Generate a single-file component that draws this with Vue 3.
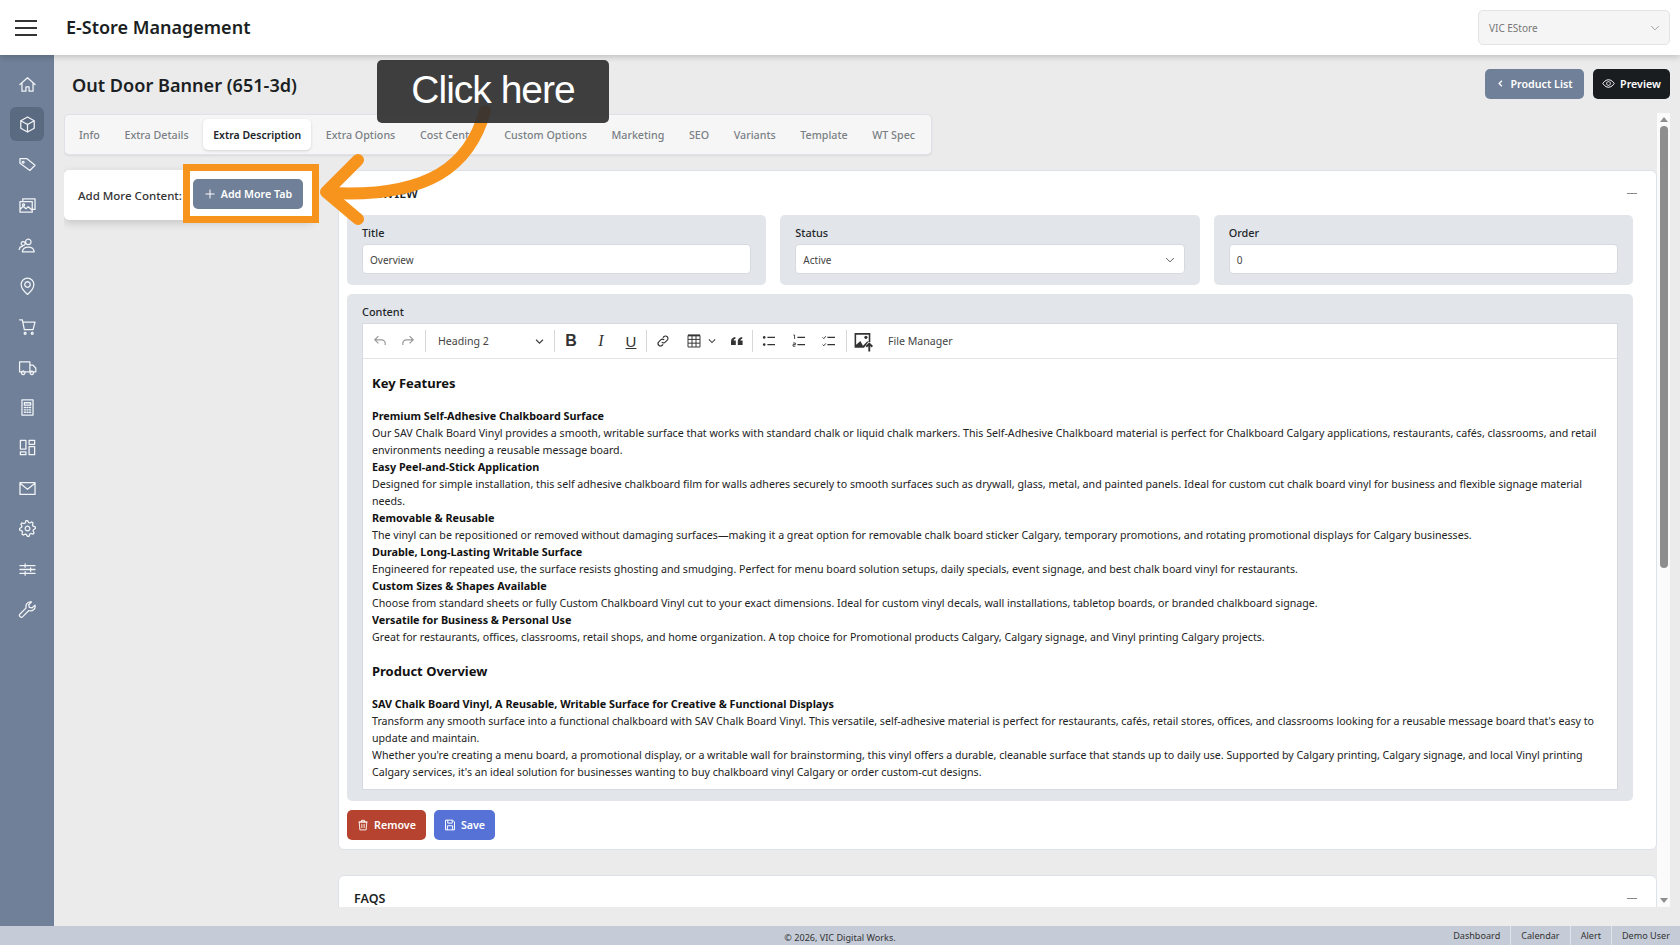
<template>
  <div class="app">
    <header class="topbar">
      <button class="burger"><span></span><span></span><span></span></button>
      <div class="brand">E-Store Management</div>
      <div class="store">
        <span>VIC EStore</span>
        <svg viewBox="0 0 16 16" width="12" height="12"><path d="M3 5.500 8 10.500l5-5" fill="none" stroke="#999" stroke-width="1.200" /></svg>
      </div>
    </header>

    <div class="body">
      <aside class="sidebar">
        <a v-for="(icon, i) in sideIcons" :key="i" class="side-item" :class="{ active: i === 1 }">
          <svg viewBox="0 0 24 24" width="19" height="19"><path :d="icon" fill="none" stroke="#f2f4f7" stroke-width="1.600" stroke-linejoin="round" stroke-linecap="round" /></svg>
        </a>
      </aside>

      <main class="main">
        <div class="page-head">
          <h1>Out Door Banner (651-3d)</h1>
          <div class="head-actions">
            <button class="btn btn-slate">
              <svg viewBox="0 0 16 16" width="9" height="9"><path d="M10.500 3 5.500 8l5 5" fill="none" stroke="#fff" stroke-width="2.200" /></svg>
              Product List
            </button>
            <button class="btn btn-dark">
              <svg viewBox="0 0 24 24" width="13" height="13"><path d="M1.500 12S5.500 5 12 5s10.500 7 10.500 7-4 7-10.500 7S1.500 12 1.500 12z M12 8.500a3.500 3.500 0 1 0 .01 0" fill="none" stroke="#fff" stroke-width="1.800" /></svg>
              Preview
            </button>
          </div>
        </div>

        <div class="scroller">
          <div class="scroll-content">
            <nav class="tabs">
              <a v-for="tab in tabs" :key="tab" class="tab" :class="{ active: tab === 'Extra Description' }">{{ tab }}</a>
            </nav>

            <div class="columns">
              <div class="side-col">
                <div class="add-card">
                  <span>Add More Content:</span>
                </div>
              </div>

              <div class="content-col">
                <section class="card">
                  <div class="card-head">
                    <h2>OVERVIEW</h2>
                    <span class="minus"></span>
                  </div>

                  <div class="fields">
                    <div class="group">
                      <label>Title</label>
                      <div class="input">Overview</div>
                    </div>
                    <div class="group">
                      <label>Status</label>
                      <div class="input select">
                        Active
                        <svg viewBox="0 0 16 16" width="12" height="12"><path d="M3 5.500 8 10.500l5-5" fill="none" stroke="#555" stroke-width="1.300" /></svg>
                      </div>
                    </div>
                    <div class="group">
                      <label>Order</label>
                      <div class="input">0</div>
                    </div>
                  </div>

                  <div class="group content-group">
                    <label>Content</label>
                    <div class="editor">
                      <div class="toolbar">
                        <button class="tool w28"><svg viewBox="0 0 20 20"><path d="M8 4 3.500 8.500 8 13M4 8.500h8a4.500 4.500 0 0 1 4.500 4.500v2" fill="none" stroke="#999" stroke-width="1.500" /></svg></button>
                        <button class="tool w28"><svg viewBox="0 0 20 20"><path d="M12 4l4.500 4.500L12 13M16 8.500H8A4.500 4.500 0 0 0 3.500 13v2" fill="none" stroke="#999" stroke-width="1.500" /></svg></button>
                        <i class="sep sep-undo"></i>
                        <div class="heading-pick">
                          <span>Heading 2</span>
                          <svg viewBox="0 0 16 16" width="11" height="11"><path d="M3 5.500 8 10.500l5-5" fill="none" stroke="#444" stroke-width="1.800" /></svg>
                        </div>
                        <i class="sep"></i>
                        <button class="tool glyph bold">B</button>
                        <button class="tool glyph italic">I</button>
                        <button class="tool glyph under">U</button>
                        <i class="sep"></i>
                        <button class="tool"><svg viewBox="0 0 20 20"><path d="M8.500 11.500a3 3 0 0 0 4.300 0l2.500-2.500a3 3 0 0 0-4.300-4.300L9.800 5.900M11.500 8.500a3 3 0 0 0-4.300 0L4.700 11a3 3 0 0 0 4.300 4.300l1.200-1.200" fill="none" stroke="#333" stroke-width="1.400" /></svg></button>
                        <button class="tool table-tool">
                          <svg viewBox="0 0 20 20"><path d="M2.500 3h15v14.500h-15zM2.500 8h15M2.500 12.700h15M7.500 3v14.500M12.500 3v14.500" fill="none" stroke="#333" stroke-width="1.200" /><path d="M2.500 3h15" stroke="#333" stroke-width="2.400" /></svg>
                          <svg class="caret" viewBox="0 0 16 16"><path d="M3 5.500 8 10.500l5-5" fill="none" stroke="#444" stroke-width="1.800" /></svg>
                        </button>
                        <button class="tool"><svg viewBox="0 0 20 20"><path d="M2.500 15v-4.500C2.500 7.500 4.500 5.500 8 5v2.200c-1.500.3-2.300 1.200-2.300 2.300H8.500V15zM11 15v-4.500c0-3 2-5 5.500-5.500v2.200c-1.500.3-2.300 1.200-2.300 2.300H17V15z" fill="#333" /></svg></button>
                        <i class="sep"></i>
                        <button class="tool"><svg viewBox="0 0 20 20"><path d="M8 5.500h9.500M8 14.500h9.500" stroke="#333" stroke-width="1.400" /><circle cx="4" cy="5.500" r="1.600" fill="#333" /><circle cx="4" cy="14.500" r="1.600" fill="#333" /></svg></button>
                        <button class="tool"><svg viewBox="0 0 20 20"><path d="M8 5.500h9.500M8 14.500h9.500" stroke="#333" stroke-width="1.400" /><path d="M3 2.500h1.500v5M2.500 12.500h3v2h-3v2h3" fill="none" stroke="#333" stroke-width="1.100" /></svg></button>
                        <button class="tool"><svg viewBox="0 0 20 20"><path d="M8 5.500h9.500M8 14.500h9.500" stroke="#333" stroke-width="1.400" /><path d="M2 5.500 3.500 7 6 4M2 14.500 3.500 16 6 13" fill="none" stroke="#333" stroke-width="1.200" /></svg></button>
                        <i class="sep sep-image"></i>
                        <button class="tool image-tool"><svg viewBox="0 0 20 20"><path d="M1.500 2h15v8.500h-2L10.500 16h-9z" fill="#333" /><path d="M3 3.500h12v6.500h-1.500L9.500 14 7 9.500 3 13z" fill="#fff" /><circle cx="12.300" cy="6" r="1.500" fill="#333" /><path d="M15.500 19.500v-7M12.600 15l2.900-3 2.900 3" fill="none" stroke="#333" stroke-width="1.800" /></svg></button>
                        <span class="file-manager">File Manager</span>
                      </div>

                      <div class="doc">
                        <h3>Key Features</h3>
                        <p><b>Premium Self-Adhesive Chalkboard Surface</b></p>
                        <p>Our SAV Chalk Board Vinyl provides a smooth, writable surface that works with standard chalk or liquid chalk markers. This Self-Adhesive Chalkboard material is perfect for Chalkboard Calgary applications, restaurants, cafés, classrooms, and retail environments needing a reusable message board.</p>
                        <p><b>Easy Peel-and-Stick Application</b></p>
                        <p>Designed for simple installation, this self adhesive chalkboard film for walls adheres securely to smooth surfaces such as drywall, glass, metal, and painted panels. Ideal for custom cut chalk board vinyl for business and flexible signage material needs.</p>
                        <p><b>Removable &amp; Reusable</b></p>
                        <p>The vinyl can be repositioned or removed without damaging surfaces—making it a great option for removable chalk board sticker Calgary, temporary promotions, and rotating promotional displays for Calgary businesses.</p>
                        <p><b>Durable, Long-Lasting Writable Surface</b></p>
                        <p>Engineered for repeated use, the surface resists ghosting and smudging. Perfect for menu board solution setups, daily specials, event signage, and best chalk board vinyl for restaurants.</p>
                        <p><b>Custom Sizes &amp; Shapes Available</b></p>
                        <p>Choose from standard sheets or fully Custom Chalkboard Vinyl cut to your exact dimensions. Ideal for custom vinyl decals, wall installations, tabletop boards, or branded chalkboard signage.</p>
                        <p><b>Versatile for Business &amp; Personal Use</b></p>
                        <p>Great for restaurants, offices, classrooms, retail shops, and home organization. A top choice for Promotional products Calgary, Calgary signage, and Vinyl printing Calgary projects.</p>
                        <h3 class="second">Product Overview</h3>
                        <p><b>SAV Chalk Board Vinyl, A Reusable, Writable Surface for Creative &amp; Functional Displays</b></p>
                        <p>Transform any smooth surface into a functional chalkboard with SAV Chalk Board Vinyl. This versatile, self-adhesive material is perfect for restaurants, cafés, retail stores, offices, and classrooms looking for a reusable message board that's easy to update and maintain.</p>
                        <p>Whether you're creating a menu board, a promotional display, or a writable wall for brainstorming, this vinyl offers a durable, cleanable surface that stands up to daily use. Supported by Calgary printing, Calgary signage, and local Vinyl printing Calgary services, it's an ideal solution for businesses wanting to buy chalkboard vinyl Calgary or order custom-cut designs.</p>
                      </div>
                    </div>
                  </div>

                  <div class="card-actions">
                    <button class="btn btn-red">
                      <svg viewBox="0 0 16 16" width="12" height="12"><path d="M3 4h10l-.8 10.500H3.800zM2 4h12M6 4V1.800h4V4M6.500 6.500v5.500M9.500 6.500v5.500" fill="none" stroke="#fff" stroke-width="1.200" /></svg>
                      Remove
                    </button>
                    <button class="btn btn-blue">
                      <svg viewBox="0 0 16 16" width="12" height="12"><path d="M2 1.500h9.500L14 4v10.500H2zM5 1.500v4h6v-4M4.500 14.500V9h7v5.500" fill="none" stroke="#fff" stroke-width="1.300" /></svg>
                      Save
                    </button>
                  </div>
                </section>

                <section class="card faq">
                  <div class="card-head">
                    <h2>FAQS</h2>
                    <span class="minus"></span>
                  </div>
                </section>
              </div>
            </div>
          </div>

          <div class="scrollbar">
            <i class="arrow up"></i>
            <div class="thumb"></div>
            <i class="arrow down"></i>
          </div>
        </div>
      </main>
    </div>

    <footer class="footer">
      <span></span>
      <span class="copyright">© 2026, VIC Digital Works.</span>
      <nav class="foot-links">
        <a>Dashboard</a>
        <a>Calendar</a>
        <a>Alert</a>
        <a>Demo User</a>
      </nav>
    </footer>

    <!-- tutorial annotation lying over the page -->
    <div class="hl-box"><button class="btn btn-slate add-btn">
      <svg viewBox="0 0 16 16" width="12" height="12"><path d="M8 2v12M2 8h12" stroke="#fff" stroke-width="1.300" /></svg>
      Add More Tab
    </button></div>
    <svg class="arrow-svg" viewBox="0 0 1680 945" width="1680" height="945">
      <path d="M485 111C470 165 430 198 330 193" fill="none" stroke="#f7941d" stroke-width="12" stroke-linecap="round" />
      <path d="M358 160 326 192 358 219" fill="none" stroke="#f7941d" stroke-width="12" stroke-linecap="round" stroke-linejoin="round" />
    </svg>
    <div class="callout">Click here</div>
  </div>
</template>

<script setup>
const tabs = [
  'Info', 'Extra Details', 'Extra Description', 'Extra Options', 'Cost Center',
  'Custom Options', 'Marketing', 'SEO', 'Variants', 'Template', 'WT Spec',
]

// gear outline for the settings entry
const gear = () => {
  let d = ''
  const teeth = 8
  for (let i = 0; i < teeth * 4; i++) {
    const a = (i / (teeth * 4)) * Math.PI * 2 - 0.2
    const r = i % 4 < 2 ? 10 : 7.6
    d += `${i ? 'L' : 'M'}${(12 + r * Math.cos(a)).toFixed(1)} ${(12 + r * Math.sin(a)).toFixed(1)}`
  }
  return d + 'z M12 9a3 3 0 1 0 .01 0'
}

const sideIcons = [
  'M2.500 12 12 3.500l9.500 8.500M5 10v10.500h5V15h4v5.500h5V10',
  'M12 2.500l8.500 4.700v9.600L12 21.500l-8.500-4.700V7.200zM3.500 7.200 12 12l8.500-4.800M12 12v9.500',
  'M2.500 4.500h8.500l10.500 8.500-6.500 6.500-12.500-9zM6.500 8a1.200 1.200 0 1 0 .01 0',
  'M6 7V3.500h15.500V17H18M2.500 7H18v13.500H2.500zM2.500 17l4-4 3.500 3 3-2.500 5 4.500M7 10a1.300 1.300 0 1 0 .01 0',
  'M13 4a3.500 3.500 0 1 0 .01 0M5.500 20c.5-4 3.500-6 7.500-6s7 2 7.500 6zM6.500 7a2.500 2.500 0 1 0 .01 0M1.500 17c.3-2.500 1.800-3.800 4-4',
  'M12 22s8-6.700 8-12.500a8 8 0 0 0-16 0C4 15.300 12 22 12 22zM12 6a3.500 3.500 0 1 0 .01 0',
  'M2 3.500h3.500L8 16h11l2.500-9.500H6M9 19.500a1.200 1.200 0 1 0 .01 0M18 19.500a1.200 1.200 0 1 0 .01 0',
  'M2 5h13v12.500H2zM15 9h4l3.500 4v4.500H15M6.500 16.500a2.200 2.200 0 1 0 .01 0M17.500 16.500a2.200 2.200 0 1 0 .01 0',
  'M5 2.500h14v19H5zM8 6h8v3H8zM8 12h1.500M11.250 12h1.500M14.500 12H16M8 15h1.500M11.250 15h1.500M14.500 15H16M8 18h1.500M11.250 18h1.500M14.500 18H16',
  'M3 3h7v11H3zM14 3h7v5h-7zM3 17.500h7V21H3zM14 11h7v10h-7z',
  'M2.500 4.500h19v15h-19zM2.500 5.500 12 13l9.500-7.500',
  gear(),
  'M2.500 7h19M2.500 12h19M2.500 17h19M9 4.800v4.400M16 9.800v4.400M9 14.800v4.400',
  'M21.500 6.500a5.800 5.800 0 0 1-7.800 6.800L6 21a2.400 2.400 0 0 1-3.400-3.400l7.700-7.700A5.800 5.800 0 0 1 17 2.500l-3.500 3.500.8 3.200 3.200.8z',
]
</script>

<style scoped>
.app {
  position: relative;
  width: 1680px;
  height: 945px;
  overflow: hidden;
  display: flex;
  flex-direction: column;
  background: #ebebeb;
  font-family: "Noto Sans", "Open Sans", sans-serif;
  color: #212529;
}

button {
  font-family: inherit;
  border: none;
  cursor: pointer;
}

.topbar {
  height: 55px;
  flex: none;
  display: flex;
  align-items: center;
  padding: 0 10px 0 15px;
  background: #fff;
  box-shadow: 0 2px 6px rgba(0, 0, 0, 0.18);
  position: relative;
  z-index: 2;
}

.burger {
  width: 22px;
  display: flex;
  flex-direction: column;
  gap: 5px;
  padding: 0;
  background: none;
}

.burger span {
  height: 2px;
  background: #333;
}

.brand {
  margin-left: 29px;
  padding-bottom: 2px;
  font-size: 18px;
  font-weight: 600;
  color: #1b1f23;
}

.store {
  margin-left: auto;
  width: 192px;
  height: 35px;
  box-sizing: border-box;
  display: flex;
  align-items: center;
  justify-content: space-between;
  padding: 0 8px 0 10px;
  background: #f5f5f5;
  border: 1px solid #e3e3e3;
  border-radius: 5px;
  font-size: 10px;
  color: #777;
}

.body {
  flex: 1;
  display: flex;
  min-height: 0;
}

.sidebar {
  width: 54px;
  flex: none;
  box-sizing: border-box;
  display: flex;
  flex-direction: column;
  align-items: center;
  gap: 6.450px;
  padding-top: 12px;
  background: #6f8098;
}

.side-item {
  width: 34px;
  height: 34px;
  display: flex;
  align-items: center;
  justify-content: center;
  border-radius: 6px;
}

.side-item.active {
  background: #5a6a81;
}

.main {
  flex: 1;
  min-width: 0;
  display: flex;
  flex-direction: column;
  padding: 14px 10px 19px 10px;
}

.page-head {
  height: 30px;
  flex: none;
  display: flex;
  align-items: center;
  justify-content: space-between;
  padding-left: 8px;
}

h1 {
  margin: 0;
  padding-top: 1px;
  font-size: 18.100px;
  font-weight: 600;
  color: #1b1f23;
}

.head-actions {
  display: flex;
  gap: 9px;
}

.btn {
  height: 30px;
  display: inline-flex;
  align-items: center;
  justify-content: center;
  gap: 5px;
  border-radius: 5px;
  font-size: 10.700px;
  font-weight: 600;
  color: #fff;
  white-space: nowrap;
}

.btn-slate { background: #6f8098; }
.btn-dark { background: #1a1d20; }
.btn-red { background: #b5432f; }
.btn-blue { background: #5672d6; }

.head-actions .btn {
  padding-bottom: 2px;
}

.head-actions .btn-slate { width: 99px; }
.head-actions .btn-dark { width: 77px; }

.scroller {
  flex: 1;
  min-height: 0;
  margin-top: 14px;
  display: flex;
}

.scroll-content {
  flex: 1;
  min-width: 0;
  overflow: hidden;
  padding-top: 1px;
}

.tabs {
  width: 868px;
  height: 41px;
  box-sizing: border-box;
  display: flex;
  align-items: center;
  gap: 4.600px;
  padding: 0 4px;
  background: #f6f6f6;
  border: 1px solid #dfe2e8;
  border-radius: 5px;
  box-shadow: 0 1px 2px rgba(0, 0, 0, 0.08);
}

.tab {
  height: 31px;
  display: flex;
  align-items: center;
  padding: 0 10px;
  border-radius: 5px;
  font-size: 10.700px;
  font-weight: 500;
  color: #7a7f85;
  white-space: nowrap;
}

.tab.active {
  background: #fff;
  color: #212529;
  font-weight: 600;
  font-size: 10.500px;
  box-shadow: 0 1px 3px rgba(0, 0, 0, 0.14);
}

.columns {
  display: flex;
  align-items: flex-start;
  gap: 25px;
  margin-top: 15px;
}

.side-col {
  width: 249px;
  flex: none;
}

.add-card {
  height: 50px;
  display: flex;
  align-items: center;
  padding: 0 9px 0 14px;
  background: #fff;
  border-radius: 5px;
  box-shadow: 0 3px 8px rgba(0, 0, 0, 0.16);
  font-size: 11.500px;
  font-weight: 500;
  color: #333;
  white-space: nowrap;
}

.add-btn {
  width: 110px;
  flex: none;
}

.content-col {
  flex: 1;
  min-width: 0;
}

.card {
  box-sizing: border-box;
  height: 680px;
  padding: 0 23px 0 8px;
  background: #fff;
  border: 1px solid #dde1e8;
  border-radius: 6px;
}

.card-head {
  height: 44px;
  display: flex;
  align-items: center;
  justify-content: space-between;
  padding-left: 7px;
}

h2 {
  margin: 0;
  font-size: 12.500px;
  font-weight: 600;
  color: #1b1f23;
}

.minus {
  width: 10px;
  height: 1px;
  background: #888;
  margin-right: -4px;
}

.fields {
  display: grid;
  grid-template-columns: repeat(3, 1fr);
  gap: 14px;
}

.group {
  box-sizing: border-box;
  padding: 10px 15px 11px;
  background: #e2e5ea;
  border-radius: 5px;
}

label {
  display: block;
  height: 19px;
  line-height: 16px;
  font-size: 10.900px;
  font-weight: 500;
  color: #212529;
}

.input {
  height: 30px;
  box-sizing: border-box;
  display: flex;
  align-items: center;
  justify-content: space-between;
  padding: 1px 8px 0 7px;
  background: #fff;
  border: 1px solid #d6dae0;
  border-radius: 4px;
  font-size: 10px;
  color: #444;
}

.content-group {
  margin-top: 9px;
  height: 507px;
}

.editor {
  height: 467px;
  box-sizing: border-box;
  background: #fff;
  border: 1px solid #d6dae0;
  display: flex;
  flex-direction: column;
}

.toolbar {
  height: 34px;
  flex: none;
  display: flex;
  align-items: center;
  padding-left: 3px;
  border-bottom: 1px solid #e3e5e8;
}

.tool {
  width: 30px;
  height: 28px;
  flex: none;
  display: flex;
  align-items: center;
  justify-content: center;
  padding: 0;
  background: none;
  color: #333;
}

.tool svg {
  width: 16px;
  height: 16px;
}

.tool.image-tool svg {
  width: 21px;
  height: 21px;
}

.w28 { width: 28px; }

.glyph {
  font-size: 16px;
  line-height: 1;
}

.bold {
  font-family: "Liberation Sans", sans-serif;
  font-weight: 700;
}

.italic {
  font-family: "Liberation Serif", serif;
  font-style: italic;
}

.under {
  font-family: "Liberation Sans", sans-serif;
  font-size: 15px;
  text-decoration: underline;
}

.table-tool {
  width: 44px;
  gap: 5px;
  justify-content: flex-start;
  padding-left: 8px;
}

.tool svg.caret {
  width: 10px;
  height: 10px;
}

.sep {
  width: 1px;
  height: 22px;
  margin: 0 1px 0 0;
  background: #d5d7da;
  flex: none;
}

.sep-undo { margin-left: 3px; }
.sep-image { margin-left: 2px; }

.heading-pick {
  width: 127px;
  box-sizing: border-box;
  display: flex;
  align-items: center;
  justify-content: space-between;
  padding: 0 9px 0 11px;
  font-size: 10.600px;
  color: #444;
}

.file-manager {
  margin-left: 10px;
  font-size: 10.600px;
  color: #444;
}

.doc {
  padding: 0 9px;
  font-size: 10.650px;
  line-height: 17px;
  color: #222;
}

.doc h3 {
  margin: 14px 0 14px;
  font-size: 13px;
  line-height: 20px;
  font-weight: 700;
  color: #111;
}

.doc h3.second {
  margin: 16px 0 14px;
}

.doc p {
  margin: 0;
}

/* plain paragraphs sit a pixel lower than the bold lead-ins */
.doc p:not(:has(b)) {
  padding-top: 1px;
  margin-bottom: -1px;
}

.doc b {
  display: block;
  font-size: 10.800px;
  font-weight: 700;
  color: #111;
}

.card-actions {
  display: flex;
  gap: 8px;
  margin-top: 9px;
}

.btn-red { width: 79px; }
.btn-blue { width: 61px; }

.faq {
  margin-top: 25px;
  height: 60px;
}

.scrollbar {
  width: 13px;
  flex: none;
  box-sizing: border-box;
  padding: 4px 3px;
  display: flex;
  flex-direction: column;
  align-items: center;
  background: #fbfbfb;
}

.thumb {
  width: 8px;
  height: 442px;
  margin-top: 4px;
  border-radius: 4px;
  background: #8e8e8e;
}

.arrow {
  width: 0;
  height: 0;
  border-left: 4px solid transparent;
  border-right: 4px solid transparent;
}

.arrow.up { border-bottom: 5px solid #8e8e8e; }
.arrow.down { margin-top: auto; border-top: 5px solid #8e8e8e; }

.footer {
  height: 19px;
  flex: none;
  display: grid;
  grid-template-columns: 1fr auto 1fr;
  align-items: center;
  background: #c5ccd8;
  font-size: 9.100px;
  color: #333;
}

.copyright {
  padding-top: 3px;
}

.foot-links {
  display: flex;
  justify-content: flex-end;
  height: 100%;
}

.foot-links a {
  display: flex;
  align-items: center;
  padding: 0 10px;
  border-left: 1px solid #dfe3ea;
}

.foot-links a:first-child {
  border-left: none;
}

.hl-box {
  position: absolute;
  left: 183px;
  top: 164px;
  width: 136px;
  height: 59px;
  box-sizing: border-box;
  display: flex;
  align-items: center;
  padding-left: 3px;
  background: #fff;
  border: 7px solid #f7941d;
}

.arrow-svg {
  position: absolute;
  left: 0;
  top: 0;
  pointer-events: none;
}

.callout {
  position: absolute;
  left: 377px;
  top: 60px;
  width: 232px;
  height: 63px;
  box-sizing: border-box;
  padding-bottom: 3px;
  display: flex;
  align-items: center;
  justify-content: center;
  background: rgba(48, 48, 48, 0.93);
  border-radius: 5px;
  font-family: "Liberation Sans", Arial, sans-serif;
  font-size: 39px;
  letter-spacing: -1px;
  color: #fff;
}
</style>
